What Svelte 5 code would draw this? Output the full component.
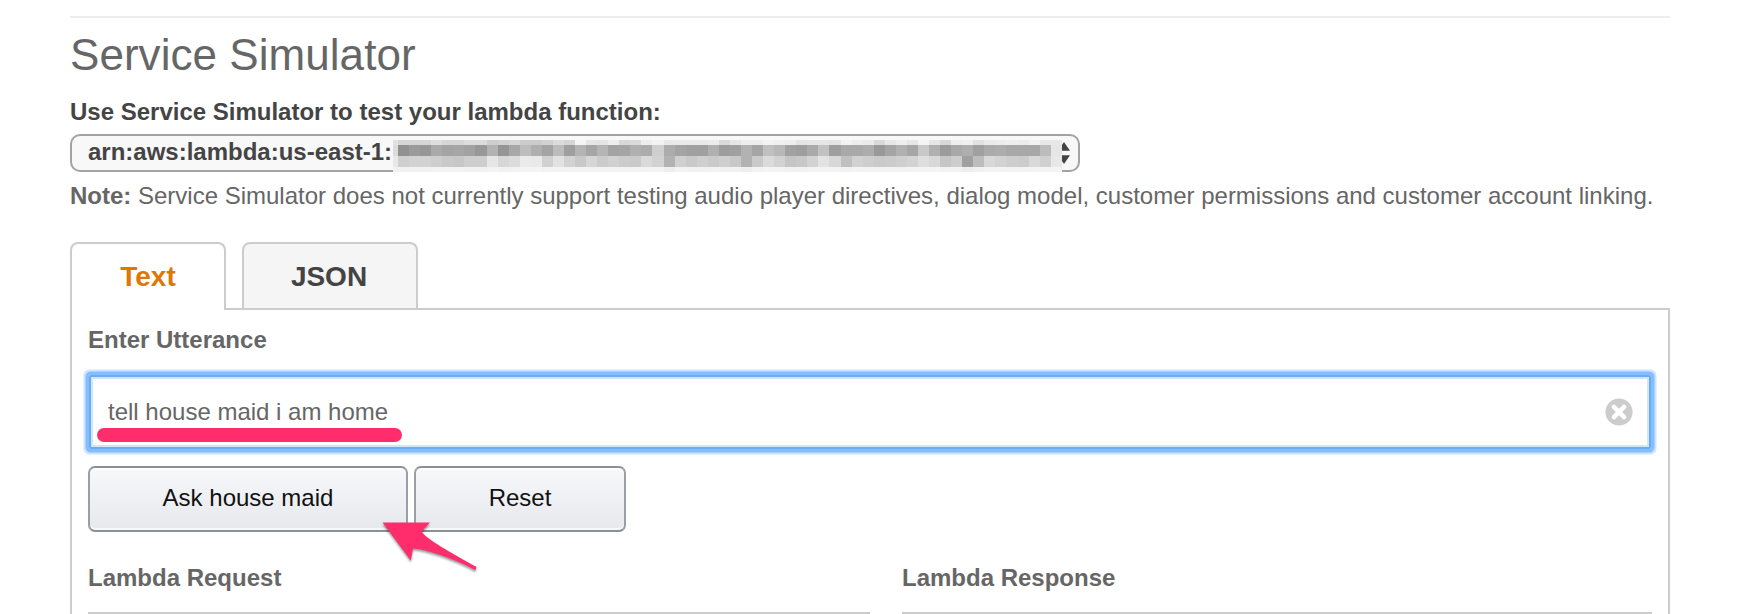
<script>
  const rows = [
    { h: 5, lead: '#e2e2e2', cells: 'd6d6d6ded6d6dcdccdd2d6ccccd1dcd6f5e6e4eed8daeef2e8e9e9eaecdae6eeeef2f0eee4e6e6e4f2eeead9e8eee6f4e6d8eef0e2eaeceeecf2e8e8' },
    { h: 11, lead: '#dcdcdc', cells: '919b97aaa4a6a298b395a8bdafa4bc9fb4a6b5a3a5b0accfaca4a0a0b09da0b2a5c0b8a29eaac29fa9a9ad99a5b1a6c8b09ca8aea0abada8a8a8bce6' },
    { h: 11, lead: '#e8e8e8', cells: 'cfd2d2cec9c7cecee6d7dceae9d1e2d2c8d6cbd1cccadad2b2d0c9cfcacfc8b2cadbd2c5c8d3e3d8c0d2cecacccfd3ded8c6cda0bdd8d3ceccd9d0e8' },
    { h: 5, lead: '#f0f0f0', cells: 'f1f1f1f2f2f2f1f1f3f1f2f4f4f2f3f2f2f2f2f2f2f2f3f3eef2f1f1f2f1f1eef2f4f3f1f1f3f4f3f1f3f2f2f2f2f3f4f4f2f2eef1f3f3f2f2f3f3f3' }
  ].map((r) => ({ ...r, cells: r.cells.match(/../g).map((v) => `#${v}${v}${v}`) }));
</script>

<main>
  <hr />
  <h1>Service Simulator</h1>
  <p class="label">Use Service Simulator to test your lambda function:</p>
  <div class="select">
    <span>arn:aws:lambda:us-east-1:</span>
    <svg class="chevrons" width="12" height="22" viewBox="0 0 12 22">
      <path d="M0 8.7 6 0l6 8.7zM0 13.3h12L6 22z" fill="#444" />
    </svg>
    <div class="mosaic">
      {#each rows as row}
        <div class="mrow" style:height="{row.h}px">
          <i class="lead" style:background={row.lead}></i>
          {#each row.cells as c}<i style:background={c}></i>{/each}
        </div>
      {/each}
    </div>
  </div>
  <p class="note"><b>Note:</b> Service Simulator does not currently support testing audio player directives, dialog model, customer permissions and customer account linking.</p>

  <nav>
    <div class="tab active">Text</div>
    <div class="tab json">JSON</div>
  </nav>
  <section>
    <h2>Enter Utterance</h2>
    <div class="field">
      <span>tell house maid i am home</span>
      <svg width="28" height="28" viewBox="0 0 28 28">
        <circle cx="14" cy="14" r="13.6" fill="#ccc" />
        <path d="M8.9 8.9 19.1 19.1M19.1 8.9 8.9 19.1" stroke="#fff" stroke-width="4.6" stroke-linecap="round" />
      </svg>
      <div class="underline"></div>
    </div>
    <div class="buttons">
      <button class="ask">Ask house maid</button>
      <button class="reset">Reset</button>
      <svg class="arrow" width="110" height="62" viewBox="0 0 110 62">
        <path d="M7.5 6.5H55L46.5 15.5C50 22 76 37 101.3 50.8Q101.5 53 100 54C78 42 49 33 38 32.6L35.8 44.5z" fill="#ff2d6c" />
      </svg>
    </div>
    <div class="results">
      <h2>Lambda Request</h2>
      <h2>Lambda Response</h2>
    </div>
  </section>
</main>

<style>
  :global(body) { background: #fff; overflow: hidden; }
  main {
    box-sizing: border-box;
    height: 614px;
    overflow: hidden;
    padding: 16px 88px 0 70px;
    font: 24px/28px "Liberation Sans", Arial, sans-serif;
    color: #666;
    display: flex;
    flex-direction: column;
  }
  hr { width: 100%; height: 2px; margin: 0; border: 0; background: #eee; flex: none; }
  h1 { margin: 13px 0 0; font-size: 44px; line-height: 48px; font-weight: 400; letter-spacing: .05px; }
  h2 { margin: 0; font-size: 24px; line-height: 28px; font-weight: 700; }
  p { margin: 0; white-space: nowrap; }
  .label { margin-top: 19px; font-weight: 700; color: #444; }
  .select {
    position: relative;
    box-sizing: border-box;
    width: 1010px;
    height: 38px;
    flex: none;
    margin-top: 8px;
    padding: 0 8px 0 16px;
    border: 2px solid #a3a3a3;
    border-radius: 10px;
    background: #f8f8f8;
    color: #444;
    font-weight: 700;
    line-height: 32px;
    display: flex;
    justify-content: space-between;
  }
  .chevrons { margin-top: 6px; }
  .mosaic { position: absolute; left: 321px; top: 4px; width: 669px; }
  .mrow { display: flex; }
  .mrow i { flex: 1; }
  .mrow .lead { flex: 0 0 5px; }
  .note { margin-top: 10px; }
  nav { display: flex; gap: 16px; margin-top: 32px; position: relative; z-index: 1; }
  .tab {
    box-sizing: border-box;
    width: 176px;
    height: 66px;
    border: 2px solid #ccc;
    border-bottom: 0;
    border-radius: 8px 8px 0 0;
    background: #f5f5f5;
    color: #444;
    font-size: 28px;
    line-height: 65px;
    font-weight: 700;
    text-align: center;
  }
  .active { width: 156px; height: 68px; margin-bottom: -2px; background: #fff; color: #e07700; }
  .json { padding-right: 2px; }
  section { flex: 1; border: 2px solid #ccc; border-bottom: 0; padding: 16px 16px 0; }
  .field {
    position: relative;
    box-sizing: border-box;
    height: 74px;
    margin: 21px 1px 0;
    padding: 0 16px 0 17px;
    border: 2px solid #6dabf0;
    border-radius: 2px;
    box-shadow: inset 0 0 0 2px #cfe6ff, 0 0 0 3.5px #85beff, 0 0 0 5.5px #cbe4ff;
    display: flex;
    align-items: center;
    justify-content: space-between;
  }
  .underline { position: absolute; left: 5.5px; top: 51px; width: 305.5px; height: 14px; border-radius: 7px; background: #ff2d6c; }
  .buttons { position: relative; display: flex; gap: 6px; margin-top: 17px; }
  button {
    box-sizing: border-box;
    height: 66px;
    padding: 0 0 3px;
    border: 2px solid #9a9ea6;
    border-top-color: #8b8f97;
    border-bottom-color: #8b8f97;
    border-radius: 7px;
    background: linear-gradient(#f7f8fa, #e7e8ec);
    box-shadow: inset 0 2px 0 #fff, inset 0 -2px 0 #f7f8fa;
    color: #111;
    font: inherit;
  }
  .ask { width: 320px; }
  .reset { width: 212px; }
  .arrow { position: absolute; left: 287px; top: 50px; filter: drop-shadow(0 2px 1px rgba(0, 0, 0, .4)); }
  .results { display: grid; grid-template-columns: 782px 750px; gap: 32px; margin-top: 32px; }
  .results h2 { padding-bottom: 20px; border-bottom: 2px solid #ccc; }
</style>
